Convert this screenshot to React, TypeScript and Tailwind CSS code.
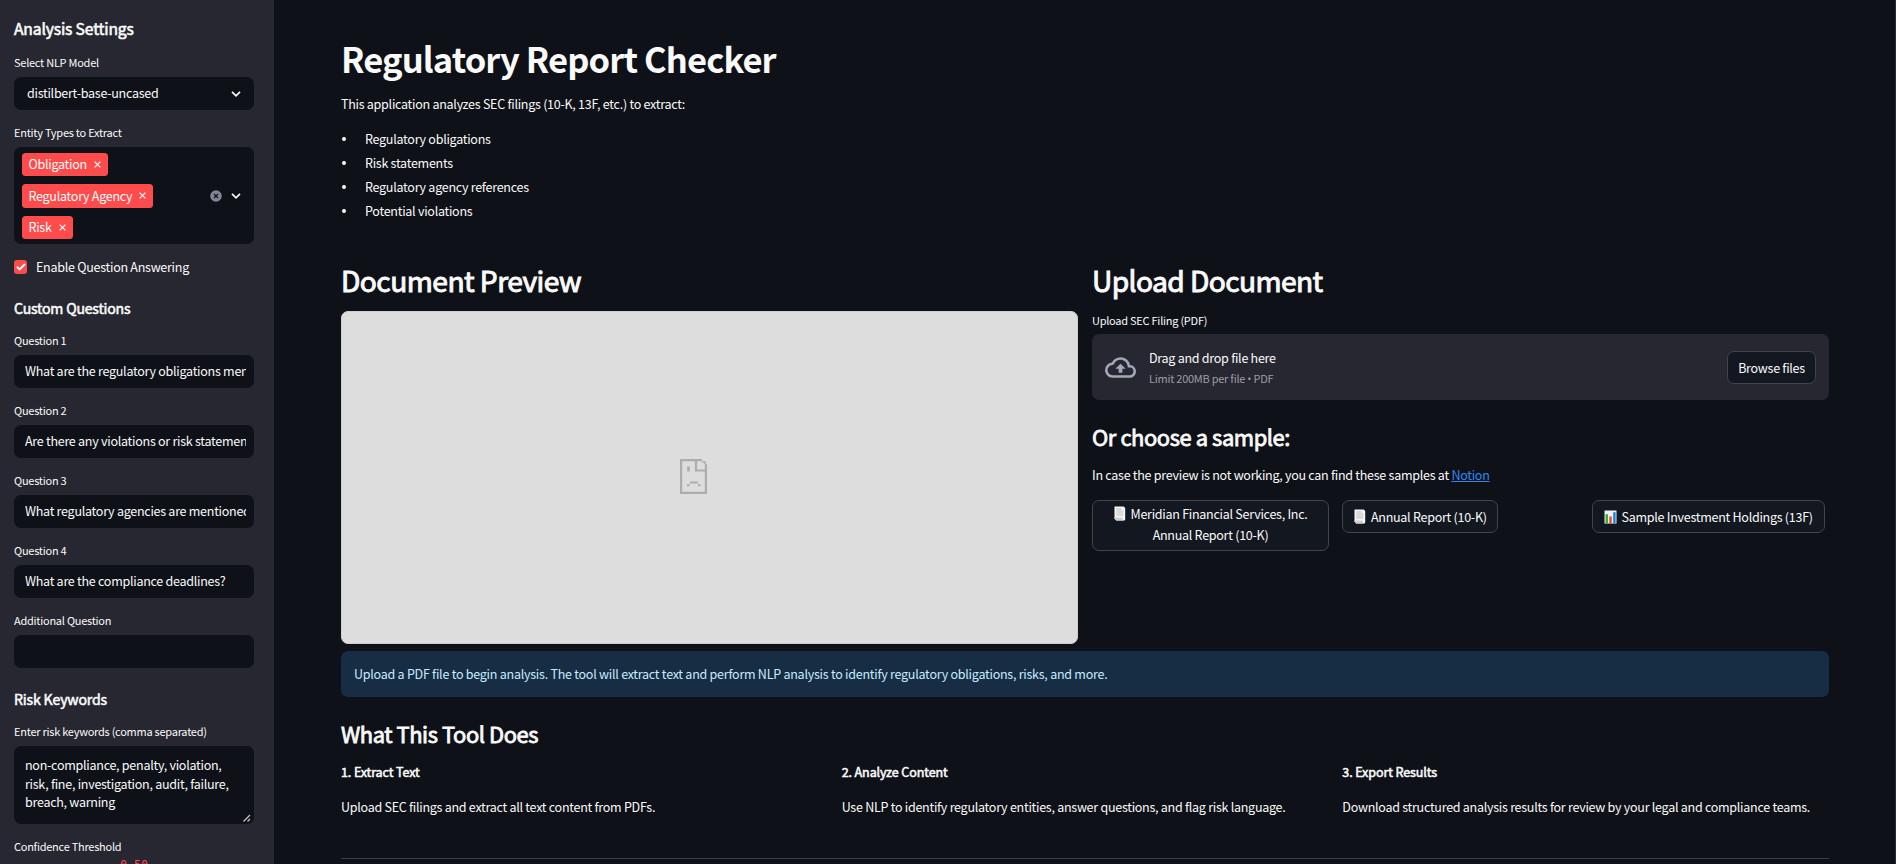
import type { ReactNode } from "react";
import { MdOutlineCloudUpload } from "react-icons/md";

const questions = [
  { label: "Question 1", value: "What are the regulatory obligations mentioned?" },
  { label: "Question 2", value: "Are there any violations or risk statements?" },
  { label: "Question 3", value: "What regulatory agencies are mentioned?" },
  { label: "Question 4", value: "What are the compliance deadlines?" },
  { label: "Additional Question", value: "" },
];

const bullets = [
  "Regulatory obligations",
  "Risk statements",
  "Regulatory agency references",
  "Potential violations",
];

const features = [
  { title: "1. Extract Text", text: "Upload SEC filings and extract all text content from PDFs." },
  {
    title: "2. Analyze Content",
    text: "Use NLP to identify regulatory entities, answer questions, and flag risk language.",
  },
  {
    title: "3. Export Results",
    text: "Download structured analysis results for review by your legal and compliance teams.",
  },
];

function Chevron() {
  return (
    <svg width="10" height="8" viewBox="0 0 10 8" fill="none" stroke="#fafafa" strokeWidth="1.7">
      <path d="M1 1.8 5 5.8 9 1.8" />
    </svg>
  );
}

function Tag({ children, size }: { children: string; size: string }) {
  return (
    <span className={`flex items-center rounded-[3.5px] bg-[#ff4b4b] pl-[6.5px] pr-[7px] text-white ${size}`}>
      <span className="flex-1 whitespace-nowrap">{children}</span>
      <svg width="7" height="7" viewBox="0 0 7 7" fill="none" stroke="white" strokeWidth="1.2">
        <path d="M.6.6 6.4 6.4M6.4.6.6 6.4" />
      </svg>
    </span>
  );
}

function Label({ children }: { children: ReactNode }) {
  return <div className="h-[18px] whitespace-nowrap text-[10.97px] leading-[18px] tracking-[-0.24px]">{children}</div>;
}

function PageIcon() {
  return (
    <svg className="mr-[5px] inline-block shrink-0 align-[-2px]" width="12" height="15" viewBox="0 0 12 15">
      <path d="M.5.5h9.2l1.5 1.6v11.7l-.8.7H2.2L.5 12.4Z" fill="#f6f6f6" />
      <path d="M2.2 3h5.2M2.2 5h7M2.2 7h7M2.2 9h7" stroke="#bdbdbd" strokeWidth="1" />
      <path d="M.5 11.4h7.6l1.4 3.1H2.2L.5 12.4Z" fill="#cfcfcf" />
    </svg>
  );
}

function ChartIcon() {
  return (
    <svg className="mr-[5px] shrink-0" width="13" height="14" viewBox="0 0 13 14">
      <path d="M.5.5h12v13H.5Z" fill="#f1f1f1" />
      <path d="M1.5 4.2H4V13H1.5Z" fill="#2fb52f" />
      <path d="M5.3 6.5h2.4V13H5.3Z" fill="#ee4427" />
      <path d="M9.2 2.2h2.4V13H9.2Z" fill="#1580dd" />
    </svg>
  );
}

function SadFileIcon() {
  return (
    <svg width="27" height="35" viewBox="0 0 27 35" fill="none" stroke="#adadad" strokeWidth="2.2">
      <path d="M22 1.1H1.1v32.8h24.8V5" />
      <path d="M16 1v10.5h10" />
      <path d="M22 3h3v2" strokeWidth="1.5" />
      <path d="M8.5 7.5v5" strokeWidth="2.6" />
      <path d="M10 23.5h8M7 26.2h2.5M18 26.2h2.5" />
    </svg>
  );
}

function Sidebar() {
  return (
    <aside className="h-full w-[274px] shrink-0 overflow-hidden bg-[#262730] pl-[14px] pr-5 pt-[18px]">
      <h2 className="h-[21px] text-[15.67px] font-normal leading-[22px] tracking-[-0.15px] [-webkit-text-stroke:0.6px]">
        Analysis Settings
      </h2>
      <div className="mt-[14px]">
        <Label>Select NLP Model</Label>
      </div>
      <div className="mt-1.5 flex h-[33px] items-center justify-between rounded-[7px] bg-[#0e1117] pl-[13px] pr-[13px]">
        <span className="pb-[2px]">distilbert-base-uncased</span>
        <Chevron />
      </div>
      <div className="mt-[13px]">
        <Label>Entity Types to Extract</Label>
      </div>
      <div className="mt-1.5 flex h-[97px] items-center rounded-[7px] bg-[#0e1117] pl-2 pr-[13px]">
        <div className="flex flex-1 flex-col gap-2">
          <Tag size="h-[23px] w-[86px]">Obligation</Tag>
          <Tag size="h-6 w-[131px]">Regulatory Agency</Tag>
          <Tag size="h-[23px] w-[51px]">Risk</Tag>
        </div>
        <svg className="mr-[9px]" width="12" height="12" viewBox="0 0 12 12">
          <circle cx="6" cy="6" r="5.8" fill="#808495" />
          <path d="m4 4 4 4m0-4-4 4" stroke="#0e1117" strokeWidth="1.2" />
        </svg>
        <Chevron />
      </div>
      <div className="mt-4 flex h-[14px] items-center">
        <span className="flex h-[14px] w-[13px] items-center justify-center rounded-[3px] bg-[#ff4b4b]">
          <svg width="10" height="8" viewBox="0 0 10 8" fill="none" stroke="white" strokeWidth="2">
            <path d="M1 3.8 3.7 6.4 9 1" />
          </svg>
        </span>
        <span className="ml-[9px]">Enable Question Answering</span>
      </div>
      <h3 className="mt-6 h-[19px] text-[14.1px] font-normal leading-[20px] tracking-[-0.2px] [-webkit-text-stroke:0.55px]">
        Custom Questions
      </h3>
      <div className="mt-[14px] flex flex-col gap-[13px]">
        {questions.map((q) => (
          <div key={q.label}>
            <Label>{q.label}</Label>
            <div className="mt-1.5 h-[33px] rounded-[7px] bg-[#0e1117] pl-[11px] pr-2">
              <div className="h-[33px] overflow-hidden whitespace-nowrap leading-[32px]">{q.value}</div>
            </div>
          </div>
        ))}
      </div>
      <h3 className="mt-[21px] h-[19px] text-[14.1px] font-normal leading-[20px] tracking-[-0.15px] [-webkit-text-stroke:0.55px]">
        Risk Keywords
      </h3>
      <div className="mt-[14px]">
        <Label>Enter risk keywords (comma separated)</Label>
      </div>
      <div className="relative mt-1.5 h-[78px] rounded-[7px] bg-[#0e1117] pl-[11px] pt-[10px] leading-[18.7px]">
        non-compliance, penalty, violation,
        <br />
        risk, fine, investigation, audit, failure,
        <br />
        breach, warning
        <svg className="absolute bottom-0.5 right-[3px]" width="8" height="8" viewBox="0 0 8 8" stroke="#c4c4c4" strokeWidth="1.3">
          <path d="M.5 7.5 7 1M4.5 7.5 7 5" />
        </svg>
      </div>
      <div className="mt-[13px]">
        <Label>Confidence Threshold</Label>
      </div>
      <div className="pl-[106px] pt-[2px] font-['DejaVu_Sans_Mono',monospace] text-[11.7px] leading-4 tracking-normal text-[#ff4b4b]">
        0.50
      </div>
    </aside>
  );
}

function SampleButton({ children, className }: { children: ReactNode; className: string }) {
  return (
    <button className={`rounded-[7px] border border-[#41444c] bg-[#131720] leading-[21px] tracking-[-0.27px] ${className}`}>
      {children}
    </button>
  );
}

export default function App() {
  return (
    <div className="flex h-[864px] w-full overflow-hidden bg-[#0e1117] font-['Noto_Sans_CJK_SC','Noto_Sans',sans-serif] text-[12.53px] leading-[22px] tracking-[-0.27px] text-[#fafafa]">
      <Sidebar />
      <main className="h-full flex-1 border-r border-[#2b2d33] pl-[67px] pr-[66px] pt-[35px]">
        <h1 className="h-[46px] text-[34.5px] font-bold leading-[46px] tracking-[-0.88px]">Regulatory Report Checker</h1>
        <p className="mt-3">This application analyzes SEC filings (10-K, 13F, etc.) to extract:</p>
        <ul className="mt-[12px]">
          {bullets.map((b) => (
            <li key={b} className="flex h-6 items-center leading-6">
              <span className="ml-px mr-[19px] h-1 w-1 rounded-full bg-[#fafafa]" />
              {b}
            </li>
          ))}
        </ul>

        <div className="mt-[37px] grid grid-cols-2 gap-[14px]">
          <section>
            <h2 className="h-[38px] text-[28.2px] font-normal leading-[40px] tracking-[-0.55px] [-webkit-text-stroke:0.95px]">
              Document Preview
            </h2>
            <div className="mt-[13px] flex h-[333px] items-center justify-center rounded-[7px] border border-[#cfcfcf] bg-[#dddddd] pb-[3px] pr-[32px]">
              <SadFileIcon />
            </div>
          </section>
          <section>
            <h2 className="h-[38px] text-[28.2px] font-normal leading-[40px] tracking-[-0.6px] [-webkit-text-stroke:0.95px]">
              Upload Document
            </h2>
            <div className="mt-[13px]">
              <Label>Upload SEC Filing (PDF)</Label>
            </div>
            <div className="mt-[5px] flex h-[66px] items-center rounded-[7px] bg-[#262730] px-[13px]">
              <MdOutlineCloudUpload className="h-[31px] w-[31px] text-[#a3a8b8]" />
              <div className="ml-[13px] flex-1">
                <div className="leading-[22px]">Drag and drop file here</div>
                <div className="text-[10.97px] leading-[19px] tracking-[-0.24px] text-[#9c9da3]">
                  Limit 200MB per file <span className="font-['Open_Sans',sans-serif]">•</span> PDF
                </div>
              </div>
              <SampleButton className="h-[33px] w-[89px]">Browse files</SampleButton>
            </div>
            <h3 className="mt-[22px] h-[30px] text-[21.9px] font-normal leading-[30px] tracking-[-0.42px] [-webkit-text-stroke:0.8px]">
              Or choose a sample:
            </h3>
            <p className="mt-[12px]">
              In case the preview is not working, you can find these samples at{" "}
              <a className="text-[#2b8cf5] underline">Notion</a>
            </p>
            <div className="mt-[14px] grid grid-cols-3 items-start gap-[14px]">
              <SampleButton className="h-[51px] w-[237px] pb-1">
                <PageIcon />
                Meridian Financial Services, Inc.
                <br />
                Annual Report (10-K)
              </SampleButton>
              <SampleButton className="flex h-[33px] w-[156px] items-center justify-center whitespace-nowrap">
                <PageIcon />
                Annual Report (10-K)
              </SampleButton>
              <SampleButton className="-ml-px flex h-[33px] w-[233px] items-center justify-center whitespace-nowrap">
                <ChartIcon />
                Sample Investment Holdings (13F)
              </SampleButton>
            </div>
          </section>
        </div>

        <div className="mt-[7px] h-[46px] rounded-[7px] bg-[#172d43] px-[13px] pt-[12px] tracking-[-0.255px] text-[#c7ebff]">
          Upload a PDF file to begin analysis. The tool will extract text and perform NLP analysis to identify regulatory
          obligations, risks, and more.
        </div>

        <h3 className="mt-[22px] h-[30px] text-[21.9px] font-normal leading-[30px] tracking-[-0.42px] [-webkit-text-stroke:0.8px]">
          What This Tool Does
        </h3>
        <div className="mt-3 grid grid-cols-3 gap-[14px]">
          {features.map((f) => (
            <div key={f.title} className="whitespace-nowrap">
              <p className="tracking-[-0.1px] [-webkit-text-stroke:0.55px]">{f.title}</p>
              <p className="mt-[13px]">{f.text}</p>
            </div>
          ))}
        </div>
        <hr className="mt-[40px] border-[#3a3c43]" />
      </main>
    </div>
  );
}
